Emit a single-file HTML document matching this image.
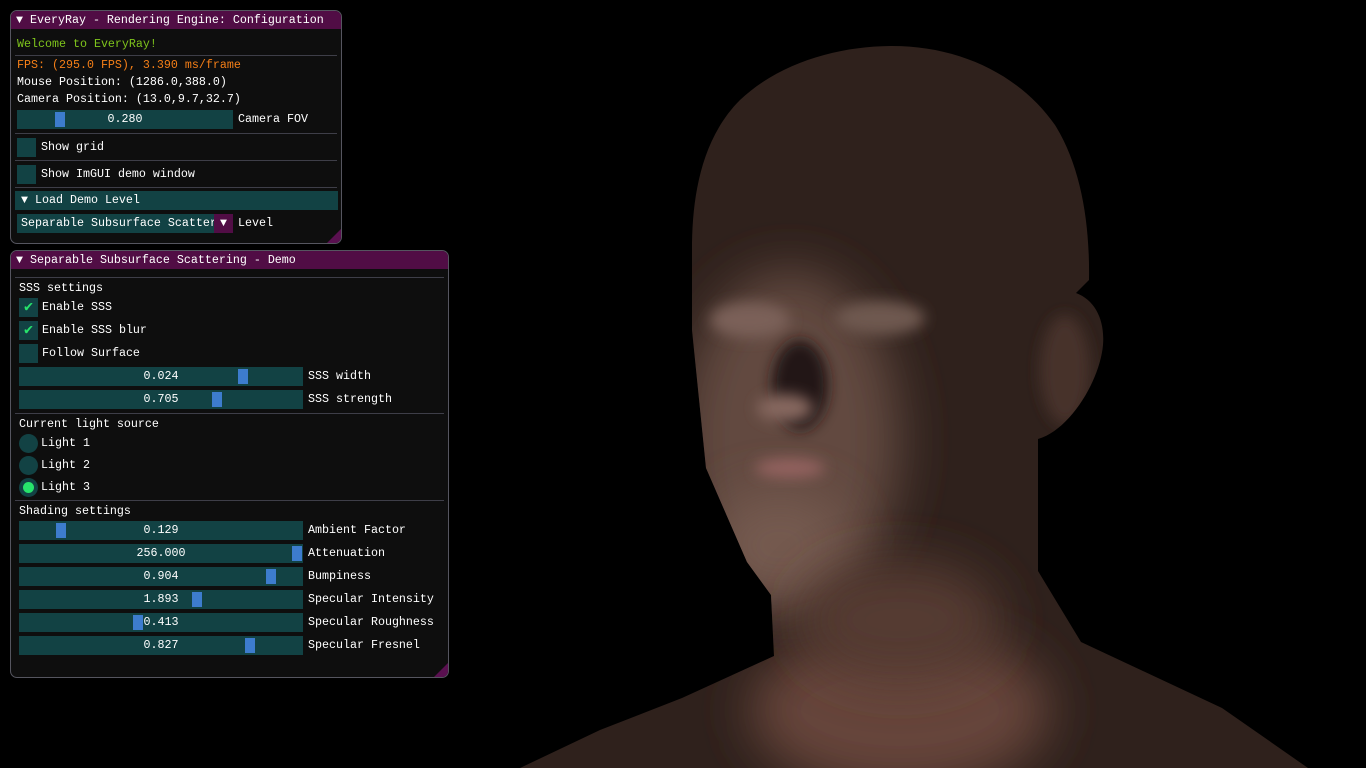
<!DOCTYPE html>
<html><head><meta charset="utf-8"><style>
*{margin:0;padding:0;box-sizing:border-box}
body{width:1366px;height:768px;background:#000;overflow:hidden;position:relative;font-family:"Liberation Mono","DejaVu Sans Mono",monospace;font-size:11.67px;color:#fff}
.abs{position:absolute;white-space:pre;line-height:18px}
.win{position:absolute;background:#0e0e0e;border:1px solid #55555f;border-radius:7px;overflow:hidden}
.title{position:absolute;left:0;top:0;right:0;height:18px;background:#510d45;line-height:18px;padding-left:5px}
.sep{position:absolute;height:1px;background:#3e3e48}
.frame{position:absolute;background:#124244;height:19px;line-height:19px;text-align:center}
.grab{position:absolute;top:2px;width:10px;height:15px;background:#3d7ccd}
.cb{position:absolute;width:19px;height:19px;background:#124244}
.rad{position:absolute;width:19px;height:19px;border-radius:50%;background:#124244}
.grip{position:absolute;right:0;bottom:0;width:0;height:0;border-left:14px solid transparent;border-bottom:14px solid #5a1050}
</style></head><body>
<svg width="1366" height="768" style="position:absolute;left:0;top:0">
<defs>
<filter id="b" x="-50%" y="-50%" width="200%" height="200%"><feGaussianBlur stdDeviation="25"/></filter>
<filter id="s" x="-50%" y="-50%" width="200%" height="200%"><feGaussianBlur stdDeviation="7"/></filter>
<clipPath id="body"><path d="M520,768 L600,730 L682,698 L774,656 L771,595 L747,562 L706,468 L692,330 L692,250 C692,200 700,140 740,100 C780,62 840,46 892,46 C960,46 1020,75 1055,125 C1080,165 1090,220 1089,280 L1076,293 C1095,300 1105,320 1103,345 C1100,380 1070,430 1038,439 L1038,571 L1081,642 L1222,708 L1308,768 Z"/></clipPath>
</defs>
<g clip-path="url(#body)">
<rect x="500" y="40" width="820" height="728" fill="#2f211c"/>
<ellipse cx="790" cy="440" rx="110" ry="170" fill="#624840" filter="url(#b)"/>
<ellipse cx="780" cy="545" rx="70" ry="55" fill="#755a50" filter="url(#b)"/>
<ellipse cx="900" cy="710" rx="150" ry="80" fill="#66443a" filter="url(#b)"/>
<ellipse cx="900" cy="620" rx="100" ry="60" fill="#553a31" filter="url(#b)"/>
<ellipse cx="750" cy="320" rx="40" ry="18" fill="#7a6058" filter="url(#s)"/>
<ellipse cx="880" cy="318" rx="45" ry="17" fill="#6e5850" filter="url(#s)"/>
<ellipse cx="800" cy="385" rx="28" ry="45" fill="#241814" filter="url(#s)"/>
<ellipse cx="785" cy="408" rx="28" ry="14" fill="#86685e" filter="url(#s)"/>
<ellipse cx="790" cy="468" rx="35" ry="10" fill="#93625f" filter="url(#s)"/>
<ellipse cx="1065" cy="370" rx="25" ry="55" fill="#463129" filter="url(#s)"/>
</g>
</svg>

<div class="win" style="left:10px;top:10px;width:332px;height:234px">
<div class="title">▼ EveryRay - Rendering Engine: Configuration</div>
<div class="abs" style="left:6px;top:24px;color:#7fc51c">Welcome to EveryRay!</div>
<div class="sep" style="left:4px;right:4px;top:44px"></div>
<div class="abs" style="left:6px;top:45px;color:#f57f17">FPS: (295.0 FPS), 3.390 ms/frame</div>
<div class="abs" style="left:6px;top:62px">Mouse Position: (1286.0,388.0)</div>
<div class="abs" style="left:6px;top:79px">Camera Position: (13.0,9.7,32.7)</div>
<div class="frame" style="left:6px;top:99px;width:216px">0.280<div class="grab" style="left:38px"></div></div>
<div class="abs" style="left:227px;top:99px">Camera FOV</div>
<div class="sep" style="left:4px;right:4px;top:122px"></div>
<div class="cb" style="left:6px;top:127px"></div>
<div class="abs" style="left:30px;top:127px">Show grid</div>
<div class="sep" style="left:4px;right:4px;top:149px"></div>
<div class="cb" style="left:6px;top:154px"></div>
<div class="abs" style="left:30px;top:154px">Show ImGUI demo window</div>
<div class="sep" style="left:4px;right:4px;top:176px"></div>
<div class="frame" style="left:4px;top:180px;width:323px;text-align:left;padding-left:6px">▼  Load Demo Level</div>
<div class="frame" style="left:6px;top:203px;width:216px;text-align:left;padding-left:4px;overflow:hidden">Separable Subsurface Scatter</div>
<div class="abs" style="left:203px;top:203px;width:19px;height:19px;background:#510d45;text-align:center;line-height:19px">▼</div>
<div class="abs" style="left:227px;top:203px">Level</div>
<div class="grip"></div>
</div>

<div class="win" style="left:10px;top:250px;width:439px;height:428px">
<div class="title">▼ Separable Subsurface Scattering - Demo</div>
<div class="sep" style="left:4px;right:4px;top:26px"></div>
<div class="abs" style="left:8px;top:28px">SSS settings</div>
<div class="cb" style="left:8px;top:47px;color:#27e36b;text-align:center;line-height:19px;font-size:15px">✔</div>
<div class="abs" style="left:31px;top:47px">Enable SSS</div>
<div class="cb" style="left:8px;top:70px;color:#27e36b;text-align:center;line-height:19px;font-size:15px">✔</div>
<div class="abs" style="left:31px;top:70px">Enable SSS blur</div>
<div class="cb" style="left:8px;top:93px"></div>
<div class="abs" style="left:31px;top:93px">Follow Surface</div>
<div class="frame" style="left:8px;top:116px;width:284px">0.024<div class="grab" style="left:219px"></div></div>
<div class="abs" style="left:297px;top:116px">SSS width</div>
<div class="frame" style="left:8px;top:139px;width:284px">0.705<div class="grab" style="left:193px"></div></div>
<div class="abs" style="left:297px;top:139px">SSS strength</div>
<div class="sep" style="left:4px;right:4px;top:162px"></div>
<div class="abs" style="left:8px;top:164px">Current light source</div>
<div class="rad" style="left:8px;top:183px"></div>
<div class="abs" style="left:30px;top:183px">Light 1</div>
<div class="rad" style="left:8px;top:205px"></div>
<div class="abs" style="left:30px;top:205px">Light 2</div>
<div class="rad" style="left:8px;top:227px"><div style="position:absolute;left:4px;top:4px;width:11px;height:11px;border-radius:50%;background:#27e36b"></div></div>
<div class="abs" style="left:30px;top:227px">Light 3</div>
<div class="sep" style="left:4px;right:4px;top:249px"></div>
<div class="abs" style="left:8px;top:251px">Shading settings</div>
<div class="frame" style="left:8px;top:270px;width:284px">0.129<div class="grab" style="left:37px"></div></div>
<div class="abs" style="left:297px;top:270px">Ambient Factor</div>
<div class="frame" style="left:8px;top:293px;width:284px">256.000<div class="grab" style="left:273px"></div></div>
<div class="abs" style="left:297px;top:293px">Attenuation</div>
<div class="frame" style="left:8px;top:316px;width:284px">0.904<div class="grab" style="left:247px"></div></div>
<div class="abs" style="left:297px;top:316px">Bumpiness</div>
<div class="frame" style="left:8px;top:339px;width:284px">1.893<div class="grab" style="left:173px"></div></div>
<div class="abs" style="left:297px;top:339px">Specular Intensity</div>
<div class="frame" style="left:8px;top:362px;width:284px">0.413<div class="grab" style="left:114px"></div></div>
<div class="abs" style="left:297px;top:362px">Specular Roughness</div>
<div class="frame" style="left:8px;top:385px;width:284px">0.827<div class="grab" style="left:226px"></div></div>
<div class="abs" style="left:297px;top:385px">Specular Fresnel</div>
<div class="grip"></div>
</div>
</body></html>
